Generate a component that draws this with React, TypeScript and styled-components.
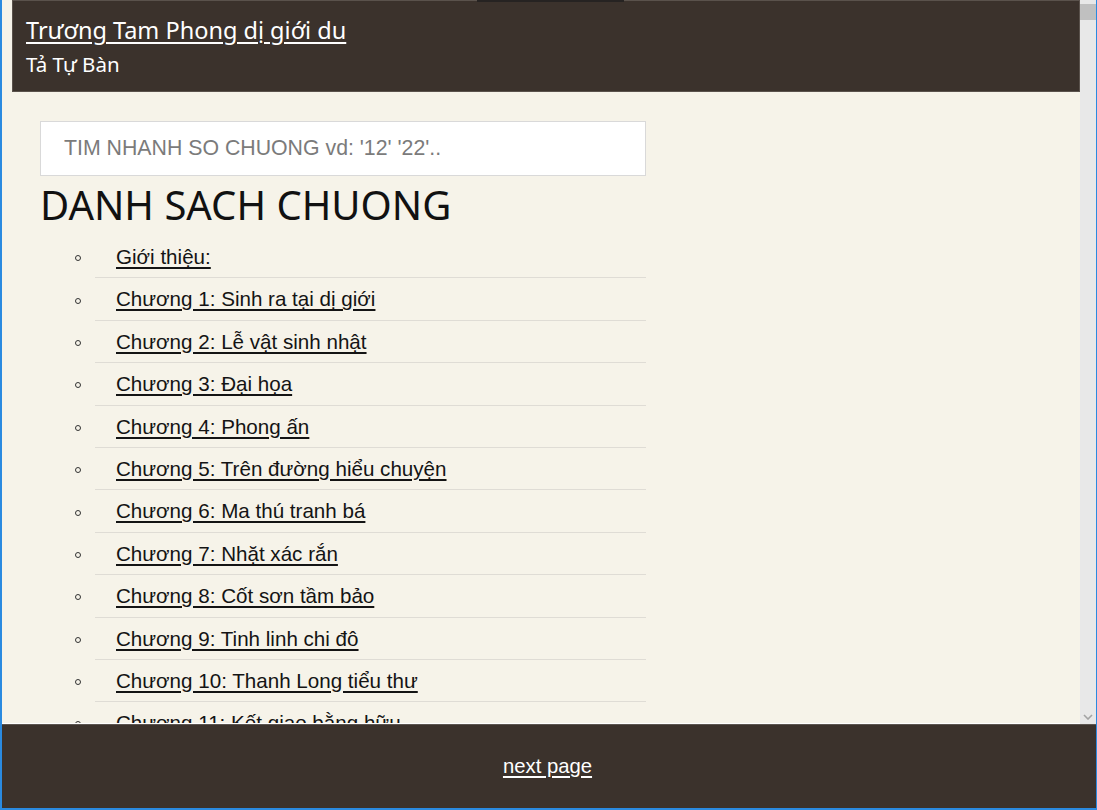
import React from "react";
import styled, { createGlobalStyle } from "styled-components";

const Global = createGlobalStyle`
  html, body { margin: 0; padding: 0; background: #f6f3e9; }
  * { box-sizing: border-box; }
`;

const Frame = styled.div`
  position: relative;
  width: 1097px;
  height: 810px;
  display: flex;
  flex-direction: column;
  border-left: 2px solid #2a8ae0;
  border-right: 1px solid #2a8ae0;
  border-bottom: 2px solid #2a8ae0;
  background: #f6f3e9;
  overflow: hidden;
`;

const TopNotch = styled.div`
  position: absolute;
  left: 475px;
  top: 0;
  width: 147px;
  height: 2px;
  background: #262322;
`;

const MainRow = styled.div`
  flex: 1;
  min-height: 0;
  display: flex;
`;

const Viewport = styled.div`
  flex: 1;
  overflow: hidden;
  background: #f6f3e9;
  border-bottom: 1px solid #ffffff;
`;

const Header = styled.header`
  margin-left: 10px;
  height: 92px;
  background: #3b322c;
  border: 1px solid #5a524c;
  padding: 15px 0 0 13px;
  font-family: "Noto Sans", "Open Sans", sans-serif;
  color: #ffffff;
`;

const Title = styled.a`
  display: inline-block;
  font-size: 23.5px;
  line-height: 29px;
  color: #ffffff;
  text-decoration: underline;
  text-underline-offset: 3px;
`;

const Subtitle = styled.div`
  margin-top: 6px;
  font-size: 20.5px;
  line-height: 26px;
`;

const Content = styled.main`
  padding: 29px 0 0 38px;
`;

const Search = styled.input`
  display: block;
  width: 606px;
  height: 55px;
  border: 1px solid #d9d9d9;
  background: #ffffff;
  padding: 0 0 0 23px;
  font-family: "Liberation Sans", Arial, sans-serif;
  font-size: 21.3px;
  outline: none;
  &::placeholder { color: #7b7b7b; }
`;

const Heading = styled.h1`
  margin: 5px 0 0 0;
  font-family: "Noto Sans", "Open Sans", sans-serif;
  font-weight: 400;
  font-size: 40px;
  line-height: 47px;
  color: #111111;
`;

const List = styled.ul`
  list-style: none;
  margin: 8px 0 0 0;
  padding: 0;
  width: 606px;
`;

const Item = styled.li`
  display: flex;
  align-items: stretch;
`;

const BulletCell = styled.span`
  width: 55px;
  flex: none;
  display: flex;
  align-items: center;
  padding-left: 35px;
  padding-top: 2px;
`;

const Bullet = styled.span`
  width: 6px;
  height: 6px;
  border: 1px solid #333;
  border-radius: 50%;
`;

const Row = styled.div`
  flex: 1;
  padding: 10px 0 9.4px 21px;
  border-bottom: 1px solid #dfdcd5;
  font-family: "Liberation Sans", Arial, sans-serif;
  font-size: 20.6px;
  line-height: 22px;
`;

const ChapterLink = styled.a`
  color: #141414;
  text-decoration: underline;
  text-underline-offset: 3px;
`;

const Scrollbar = styled.div`
  width: 16px;
  flex: none;
  background: #e8e8e8;
  display: flex;
  flex-direction: column;
  justify-content: space-between;
  padding: 4px 0 4px;
`;

const ThumbTop = styled.div`
  height: 16px;
  background: #c0c0c0;
`;

const ArrowDown = styled.div`
  display: flex;
  justify-content: center;
`;

const Footer = styled.footer`
  height: 84px;
  flex: none;
  margin-left: -1px;
  background: #3b322c;
  border-top: 1px solid #5c5550;
  display: flex;
  align-items: center;
  justify-content: center;
  padding-right: 2px;
`;

const NextLink = styled.a`
  font-family: "Liberation Sans", Arial, sans-serif;
  font-size: 20.3px;
  color: #ffffff;
  text-decoration: underline;
  text-underline-offset: 3px;
`;

const chapters = [
  "Giới thiệu:",
  "Chương 1: Sinh ra tại dị giới",
  "Chương 2: Lễ vật sinh nhật",
  "Chương 3: Đại họa",
  "Chương 4: Phong ấn",
  "Chương 5: Trên đường hiểu chuyện",
  "Chương 6: Ma thú tranh bá",
  "Chương 7: Nhặt xác rắn",
  "Chương 8: Cốt sơn tầm bảo",
  "Chương 9: Tinh linh chi đô",
  "Chương 10: Thanh Long tiểu thư",
  "Chương 11: Kết giao bằng hữu",
  "Chương 12: Hồi gia",
];

export default function App() {
  return (
    <>
      <Global />
      <Frame>
        <TopNotch />
        <MainRow>
          <Viewport>
            <Header>
              <Title href="#">Trương Tam Phong dị giới du</Title>
              <Subtitle>Tả Tự Bàn</Subtitle>
            </Header>
            <Content>
              <Search placeholder="TIM NHANH SO CHUONG vd: '12' '22'.." />
              <Heading>DANH SACH CHUONG</Heading>
              <List>
                {chapters.map((c) => (
                  <Item key={c}>
                    <BulletCell>
                      <Bullet />
                    </BulletCell>
                    <Row>
                      <ChapterLink href="#">{c}</ChapterLink>
                    </Row>
                  </Item>
                ))}
              </List>
            </Content>
          </Viewport>
          <Scrollbar>
            <ThumbTop />
            <ArrowDown>
              <svg width="10" height="6" viewBox="0 0 10 6">
                <path d="M1 1 L5 5 L9 1" stroke="#a3a3a3" strokeWidth="1.6" fill="none" />
              </svg>
            </ArrowDown>
          </Scrollbar>
        </MainRow>
        <Footer>
          <NextLink href="#">next page</NextLink>
        </Footer>
      </Frame>
    </>
  );
}
